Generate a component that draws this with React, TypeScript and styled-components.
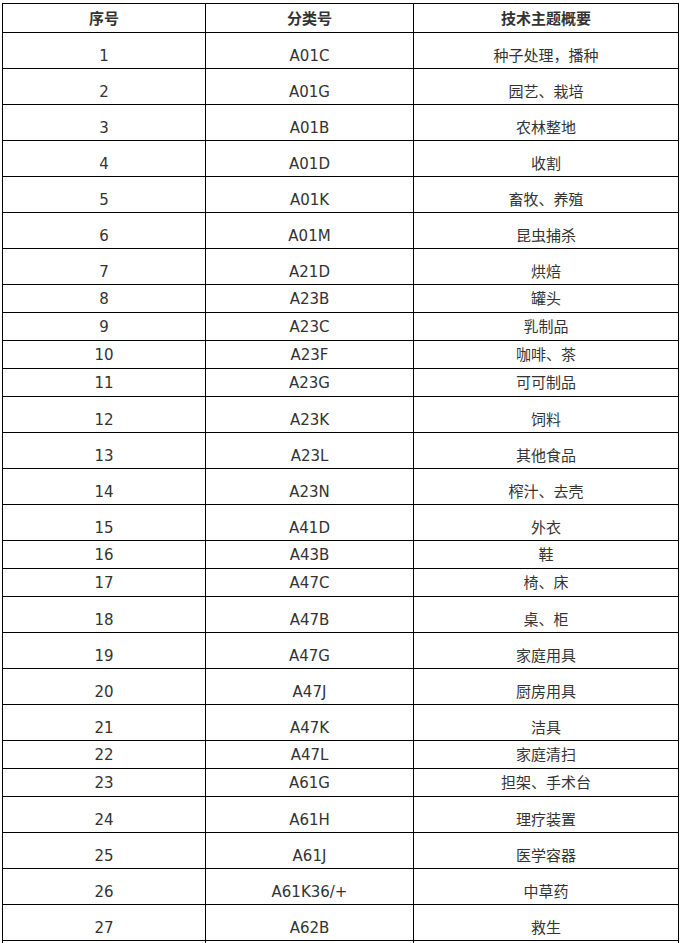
import React from 'react';
import styled, { createGlobalStyle } from 'styled-components';

interface Row {
  no: number;
  code: string;
  topic: string;
  tall?: boolean;
}

const rows: Row[] = [
  { no: 1, code: 'A01C', topic: '种子处理，播种', tall: true },
  { no: 2, code: 'A01G', topic: '园艺、栽培', tall: true },
  { no: 3, code: 'A01B', topic: '农林整地', tall: true },
  { no: 4, code: 'A01D', topic: '收割', tall: true },
  { no: 5, code: 'A01K', topic: '畜牧、养殖', tall: true },
  { no: 6, code: 'A01M', topic: '昆虫捕杀', tall: true },
  { no: 7, code: 'A21D', topic: '烘焙', tall: true },
  { no: 8, code: 'A23B', topic: '罐头' },
  { no: 9, code: 'A23C', topic: '乳制品' },
  { no: 10, code: 'A23F', topic: '咖啡、茶' },
  { no: 11, code: 'A23G', topic: '可可制品' },
  { no: 12, code: 'A23K', topic: '饲料', tall: true },
  { no: 13, code: 'A23L', topic: '其他食品', tall: true },
  { no: 14, code: 'A23N', topic: '榨汁、去壳', tall: true },
  { no: 15, code: 'A41D', topic: '外衣', tall: true },
  { no: 16, code: 'A43B', topic: '鞋' },
  { no: 17, code: 'A47C', topic: '椅、床' },
  { no: 18, code: 'A47B', topic: '桌、柜', tall: true },
  { no: 19, code: 'A47G', topic: '家庭用具', tall: true },
  { no: 20, code: 'A47J', topic: '厨房用具', tall: true },
  { no: 21, code: 'A47K', topic: '洁具', tall: true },
  { no: 22, code: 'A47L', topic: '家庭清扫' },
  { no: 23, code: 'A61G', topic: '担架、手术台' },
  { no: 24, code: 'A61H', topic: '理疗装置', tall: true },
  { no: 25, code: 'A61J', topic: '医学容器', tall: true },
  { no: 26, code: 'A61K36/+', topic: '中草药', tall: true },
  { no: 27, code: 'A62B', topic: '救生', tall: true },
];

const App: React.FC = () => {
  return (
    <>
      <GlobalStyle />
      <Page>
        <Table>
          <colgroup>
            <col style={{ width: 203 }} />
            <col style={{ width: 208 }} />
            <col />
          </colgroup>
          <thead>
            <tr>
              <HeadCell>序号</HeadCell>
              <HeadCell>分类号</HeadCell>
              <HeadCell>技术主题概要</HeadCell>
            </tr>
          </thead>
          <tbody>
            {rows.map((r) => (
              <tr key={r.no}>
                <Cell $tall={r.tall}>{r.no}</Cell>
                <Cell $tall={r.tall}>{r.code}</Cell>
                <Cell $tall={r.tall}>{r.topic}</Cell>
              </tr>
            ))}
            <tr>
              <Cell $tall>&nbsp;</Cell>
              <Cell $tall>&nbsp;</Cell>
              <Cell $tall>&nbsp;</Cell>
            </tr>
          </tbody>
        </Table>
      </Page>
    </>
  );
};

export default App;

// --- styled-components ---
const GlobalStyle = createGlobalStyle`
  html, body {
    margin: 0;
    padding: 0;
    background: #ffffff;
    overflow: hidden;
  }
  body {
    font-family: 'DejaVu Sans', 'Noto Sans CJK SC', sans-serif;
    color: #333333;
  }
`;

const Page = styled.div`
  padding: 3px 0 0 2px;
  height: 943px;
  overflow: hidden;
  box-sizing: border-box;
`;

const Table = styled.table`
  width: 677px;
  border-collapse: collapse;
  table-layout: fixed;
  font-size: 15px;
`;

const HeadCell = styled.th`
  border: 1px solid #000000;
  height: 28px;
  padding: 0;
  font-family: 'Noto Sans CJK SC', sans-serif;
  font-weight: 700;
  line-height: 20px;
  text-align: center;
  vertical-align: middle;
  color: #333333;
`;

const Cell = styled.td<{ $tall?: boolean }>`
  border: 1px solid #000000;
  height: ${(p) => (p.$tall ? '36px' : '28px')};
  padding: ${(p) => (p.$tall ? '10px 0 0' : '0')};
  box-sizing: border-box;
  line-height: 20px;
  text-align: center;
  vertical-align: middle;
  color: #333333;
`;
